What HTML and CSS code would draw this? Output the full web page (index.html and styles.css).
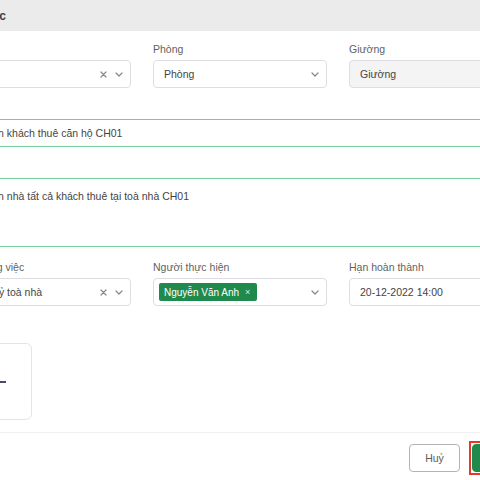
FILE: index.html
```html
<!DOCTYPE html>
<html lang="vi">
<head>
<meta charset="utf-8">
<title>Thêm công việc</title>
<link rel="stylesheet" href="styles.css">
</head>
<body>
<div class="modal">
  <div class="modal-header">
    <div class="title-box"><span class="title">Thêm công việc</span></div>
  </div>
  <div class="modal-body">
    <div class="form-grid">
      <div class="field">
        <label class="label">Căn hộ</label>
        <div class="select">
          <span class="value">CH01</span>
          <span class="icons">
            <svg class="clear" width="7" height="7" viewBox="0 0 7 7"><path d="M1 1l5 5M6 1l-5 5"/></svg>
            <svg class="chev" width="8" height="5" viewBox="0 0 8 5"><path d="M1 1l3 3 3-3"/></svg>
          </span>
        </div>
      </div>
      <div class="field">
        <label class="label">Phòng</label>
        <div class="select">
          <span class="value">Phòng</span>
          <span class="icons">
            <svg class="chev" width="8" height="5" viewBox="0 0 8 5"><path d="M1 1l3 3 3-3"/></svg>
          </span>
        </div>
      </div>
      <div class="field">
        <label class="label">Giường</label>
        <div class="select disabled">
          <span class="value">Giường</span>
        </div>
      </div>

      <div class="field span-all">
        <label class="label">Tiêu đề</label>
        <input class="input focus" type="text" value="Thu tiền khách thuê căn hộ CH01">
      </div>

      <div class="field span-all">
        <label class="label">Mô tả</label>
        <textarea class="textarea focus">Thu tiền nhà tất cả khách thuê tại toà nhà CH01</textarea>
      </div>

      <div class="field">
        <label class="label">Loại công việc</label>
        <div class="select">
          <span class="value">Quản lỷ toà nhà</span>
          <span class="icons">
            <svg class="clear" width="7" height="7" viewBox="0 0 7 7"><path d="M1 1l5 5M6 1l-5 5"/></svg>
            <svg class="chev" width="8" height="5" viewBox="0 0 8 5"><path d="M1 1l3 3 3-3"/></svg>
          </span>
        </div>
      </div>
      <div class="field">
        <label class="label">Người thực hiện</label>
        <div class="select multi">
          <span class="tag">Nguyễn Văn Anh <span class="tag-x">×</span></span>
          <span class="icons">
            <svg class="chev" width="8" height="5" viewBox="0 0 8 5"><path d="M1 1l3 3 3-3"/></svg>
          </span>
        </div>
      </div>
      <div class="field">
        <label class="label">Hạn hoàn thành</label>
        <div class="select">
          <span class="value">20-12-2022 14:00</span>
        </div>
      </div>

      <div class="field">
        <label class="label">Hình ảnh</label>
        <div class="upload">
          <svg width="24" height="24" viewBox="0 0 24 24"><path d="M12 1v22M1 12h22"/></svg>
        </div>
      </div>
    </div>
  </div>
  <div class="modal-footer">
    <button class="btn">Huỷ</button>
    <span class="focus-ring"><button class="btn primary">Lưu</button></span>
  </div>
</div>
</body>
</html>
```
FILE: styles.css
```css
html, body {
  margin: 0;
  padding: 0;
  background: #ffffff;
  overflow: hidden;
}

body {
  font-family: "Liberation Sans", Arial, sans-serif;
  color: #444;
}

.modal {
  box-sizing: border-box;
  width: 606px;
  margin-left: -63px;
  background: #fff;
}

.modal-header {
  height: 31px;
  background: #ebebeb;
  padding: 0 20px;
  display: flex;
  align-items: center;
}

.title-box {
  width: 49px;
  display: flex;
  justify-content: flex-end;
  white-space: nowrap;
}

.title {
  font-size: 12px;
  font-weight: 700;
  color: #3e3e44;
}

.modal-body {
  padding: 11px 20px 12px;
}

.form-grid {
  display: grid;
  grid-template-columns: repeat(3, 174px);
  column-gap: 22px;
  row-gap: 13px;
}

.field {
  display: flex;
  flex-direction: column;
  min-width: 0;
}

.span-all {
  grid-column: 1 / -1;
}

.label {
  font-size: 10.5px;
  line-height: 14px;
  height: 14px;
  margin-bottom: 4px;
  color: #5f5f66;
  white-space: nowrap;
}

.select {
  box-sizing: border-box;
  height: 28px;
  border: 1px solid #dedee2;
  border-radius: 4px;
  background: #fff;
  display: flex;
  align-items: center;
  padding: 0 6px 0 10px;
  font-size: 10.5px;
  color: #444;
  white-space: nowrap;
}

.select.disabled {
  background: #f4f4f5;
}

.select.multi {
  padding-left: 5px;
}

.value {
  flex: 1;
  overflow: hidden;
}

.icons {
  margin-left: auto;
  display: flex;
  align-items: center;
  gap: 8px;
}

.icons svg {
  fill: none;
  stroke: #86868e;
  stroke-width: 1.2;
  stroke-linecap: round;
  stroke-linejoin: round;
}

.icons .chev {
  margin-right: 1px;
}

.tag {
  display: inline-flex;
  align-items: center;
  height: 18px;
  padding: 0 7px 0 5px;
  background: #1f8a4c;
  color: #fff;
  border-radius: 2px;
  font-size: 10px;
  gap: 6px;
}

.tag-x {
  font-size: 9px;
  color: #d8efe0;
}

.input {
  box-sizing: border-box;
  height: 28px;
  margin: 0;
  border: 1px solid #dedee2;
  border-radius: 4px;
  padding: 0 8px;
  font-family: "Liberation Sans", Arial, sans-serif;
  font-size: 10.5px;
  color: #444;
  outline: none;
}

.textarea {
  box-sizing: border-box;
  height: 69px;
  margin: 0;
  border: 1px solid #dedee2;
  border-radius: 4px;
  padding: 10px 8px 8px;
  font-family: "Liberation Sans", Arial, sans-serif;
  font-size: 10.5px;
  line-height: 14px;
  color: #444;
  resize: none;
  outline: none;
}

.focus {
  border-color: #72cf98;
}

.upload {
  box-sizing: border-box;
  margin-top: 6px;
  width: 75px;
  height: 77px;
  border: 1px solid #e4e4e8;
  border-radius: 6px;
  display: flex;
  align-items: center;
  justify-content: center;
}

.upload svg {
  fill: none;
  stroke: #4b4a68;
  stroke-width: 2;
}

.modal-footer {
  border-top: 1px solid #efefef;
  padding: 8px 17px 8px 20px;
  display: flex;
  justify-content: flex-end;
  align-items: center;
  gap: 9px;
}

.btn {
  box-sizing: border-box;
  width: 51px;
  height: 28px;
  border: 1px solid #b4b4b8;
  border-radius: 4px;
  background: #fff;
  font-family: "Liberation Sans", Arial, sans-serif;
  font-size: 10.5px;
  color: #5a5a60;
  padding: 0;
  display: block;
}

.focus-ring {
  display: block;
  border: 2px solid #e5372b;
  padding: 1px;
}

.btn.primary {
  background: #1f8a4c;
  border-color: #1f8a4c;
  color: #fff;
}
```
